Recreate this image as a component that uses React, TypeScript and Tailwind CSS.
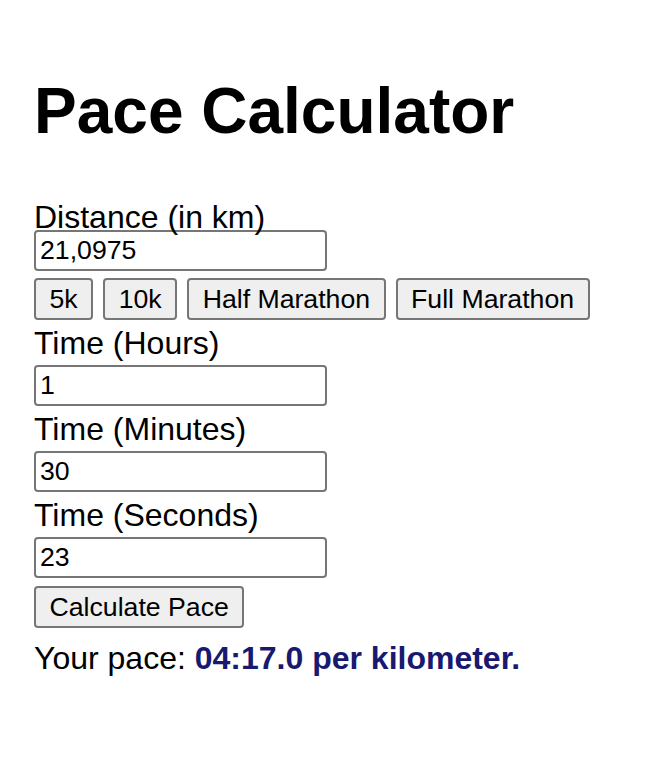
import React, { useState } from "react";

const presets = [
  { label: "5k", value: "5" },
  { label: "10k", value: "10" },
  { label: "Half Marathon", value: "21,0975" },
  { label: "Full Marathon", value: "42,195" },
];

function formatPace(secondsPerKm: number) {
  const min = Math.floor(secondsPerKm / 60);
  const sec = secondsPerKm - min * 60;
  const mm = String(min).padStart(2, "0");
  const ss = sec.toFixed(1).padStart(4, "0");
  return `${mm}:${ss}`;
}

const inputCls =
  "block w-[293px] h-[41px] border-2 border-[#767676] rounded-[4px] bg-white px-[4px] text-[26.67px] text-black outline-none";
const buttonCls =
  "h-[42px] px-[13.5px] border-2 border-[#767676] rounded-[4px] bg-[#efefef] text-[26.67px] text-black leading-none";
const labelCls = "block text-[32px] leading-[26px] mt-[10px] mb-[9px]";

export default function App() {
  const [distance, setDistance] = useState("21,0975");
  const [hours, setHours] = useState("1");
  const [minutes, setMinutes] = useState("30");
  const [seconds, setSeconds] = useState("23");
  const [pace, setPace] = useState("04:17.0");

  const calculate = () => {
    const km = parseFloat(distance.replace(",", "."));
    const total =
      (parseInt(hours) || 0) * 3600 + (parseInt(minutes) || 0) * 60 + (parseInt(seconds) || 0);
    if (km > 0) setPace(formatPace(total / km));
  };

  return (
    <div className="min-h-[778px] bg-white pl-[34px] pt-[74px] font-['Liberation_Sans',Arial,sans-serif] text-black">
      <h1 className="text-[64px] leading-[74px] font-bold">Pace Calculator</h1>

      <label className="block text-[32px] leading-[26px] mt-[56px]">Distance (in km)</label>
      <input
        className={inputCls}
        value={distance}
        onChange={(e) => setDistance(e.target.value)}
      />
      <div className="flex gap-[10px] mt-[7px]">
        {presets.map((p) => (
          <button key={p.label} className={buttonCls} onClick={() => setDistance(p.value)}>
            {p.label}
          </button>
        ))}
      </div>

      <label className={labelCls}>Time (Hours)</label>
      <input className={inputCls} value={hours} onChange={(e) => setHours(e.target.value)} />

      <label className={labelCls}>Time (Minutes)</label>
      <input className={inputCls} value={minutes} onChange={(e) => setMinutes(e.target.value)} />

      <label className={labelCls}>Time (Seconds)</label>
      <input className={inputCls} value={seconds} onChange={(e) => setSeconds(e.target.value)} />

      <button className={`${buttonCls} h-[41px] mt-[8px]`} onClick={calculate}>
        Calculate Pace
      </button>

      <p className="text-[32px] leading-[37px] mt-[12px]">
        Your pace: <span className="font-bold text-[#191970]">{pace} per kilometer.</span>
      </p>
    </div>
  );
}
